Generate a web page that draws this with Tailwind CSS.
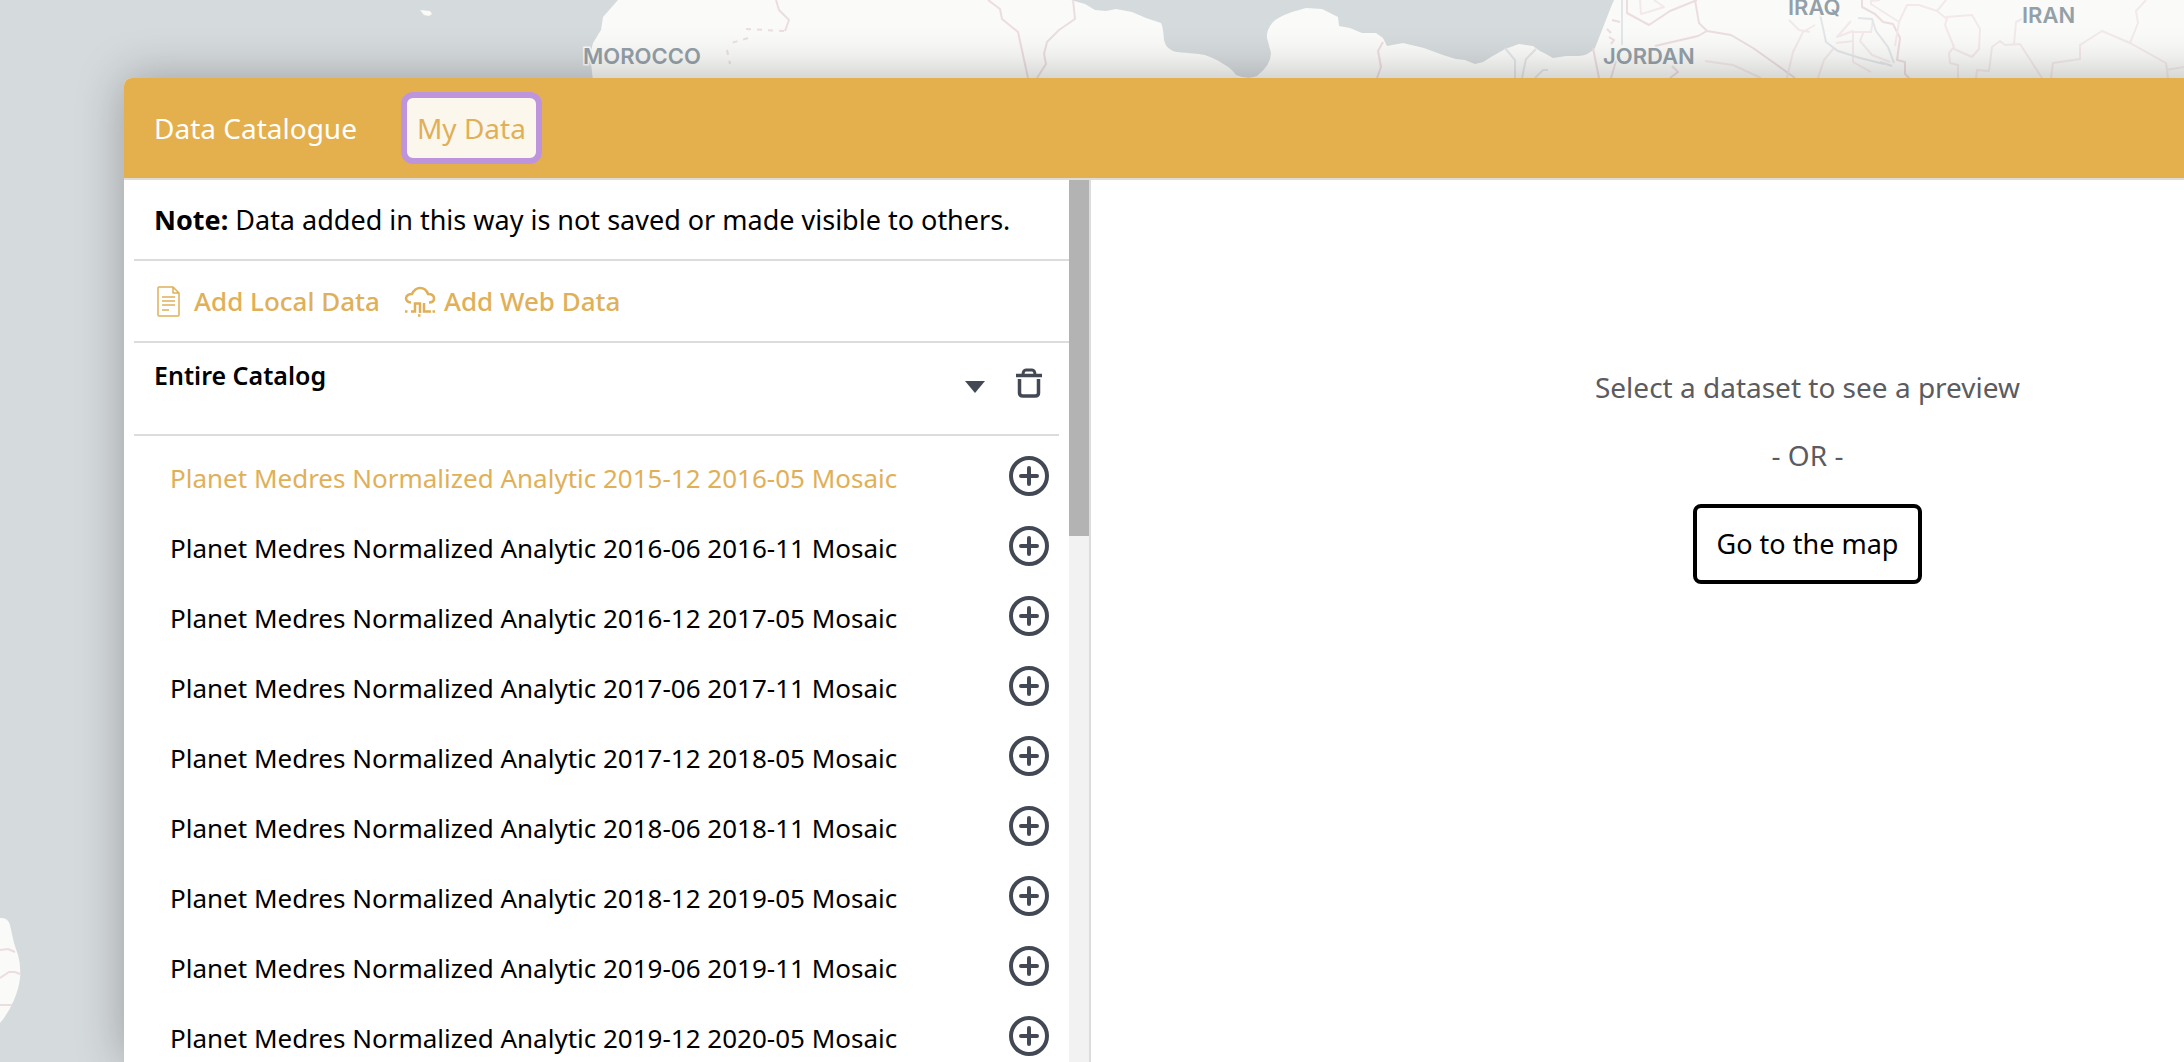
<!DOCTYPE html>
<html lang="en">
<head>
<meta charset="utf-8">
<title>Data Catalogue</title>
<script src="https://cdn.jsdelivr.net/npm/@tailwindcss/browser@4"></script>
</head>
<body class="h-screen overflow-hidden bg-[#d5dadd] font-['Noto_Sans',sans-serif] text-black">
<svg width="0" height="0" class="absolute" aria-hidden="true">
  <symbol id="plus" viewBox="0 0 40 40"><circle cx="20" cy="20" r="18" fill="none" stroke="#434954" stroke-width="4"/><path d="M20 12v16M12 20h16" fill="none" stroke="#434954" stroke-width="4" stroke-linecap="round"/></symbol>
</svg>
<div class="relative flex h-full flex-col overflow-hidden pt-[78px] pl-[124px]">
  <!-- Base map -->
  <svg class="absolute inset-0 h-full w-full" aria-hidden="true">
    <g fill="#fafaf8">
      <path d="M618 0L603 17L601 30L593 43L590 55L592 72L594 90H2300V0H1614L1611 7L1602 30L1595 48Q1589 55 1579 56L1566 56L1553 58L1546 54L1540 51L1533 46L1519 44L1505 49L1491 57L1483 62L1475 64L1465 60L1456 59L1443 55L1424 48L1403 43L1387 46L1383 38L1376 33L1362 33L1350 28L1339 26L1338 17L1322 9L1306 8L1292 12Q1278 17 1273 22Q1266 30 1267 38L1271 53Q1271 65 1257 76Q1248 80 1236 75Q1231 68 1225 65Q1210 55 1199 54L1177 52Q1166 50 1164 40Q1163 26 1161 23L1146 18L1132 12L1116 9L1106 11L1095 10L1085 4L1071 0Z"/>
      <path d="M420 10l10 1 2 3-3 2-5-1z"/>
      <path d="M0 918Q8 917 10 925L14 943L18 955Q21 965 20 978Q19 988 14 1000Q8 1014 0 1023Z"/>
    </g>
    <g fill="none" stroke="#ecdddf" stroke-width="2" stroke-linejoin="round">
      <path d="M776 0l3 10 10 10-4 11M988 0l12 9 2 10 16 13 10 46M1037 78l9-14-2-10 3-12 12-12 16-11-2-19M1383 42l-5 9 3 16-4 11"/>
      <path d="M784 31l-39-2M748 38l-20 6M727 50l3 14" stroke-dasharray="5 6"/>
      <path d="M0 950l8-1 7 3M0 978l9-6 6 0 5 2M0 1005h12"/>
      <path d="M1593 48l6 30M1611 78l5-17M1627 0l0 13 22 12 21-14 27-11M1695 0l4 23 8 8-9 5-43 10M1707 31l24 4 22 13 24 17 18 13M1612 20l8 2M1607 29l4 4M1609 37l5 3-3 4"/>
      <path d="M1862 0l0 7 13 7 8 8 10 2 7 14-3 22 8 2v12l6 6M1670 78l8-6-6-6"/>
    </g>
    <g fill="none" stroke="#f3e9ea" stroke-width="2" stroke-linejoin="round">
      <path d="M1705 61l28 4 28 13M1640 0l1 14 7-2 16-5-10-7M1880 0l-9 1 0 3 28 18 8-17 12 0 18 6 9-11M1899 22l-4 24M1937 11l10 8-2 6 9 22-5 6 1 10 8 2v13M1946 17l26-2 8 14-1 20-7 8-18-8M1976 78l1-8 12 1 3-24 8-6 5 4 15-1 22 34M2014 44l2-22 10-5M2051 78l2-15 27-4 0-14 22-14 28 12 36 20 2 15M2130 43l8-20-2-12 10-11M2166 70l18-3"/>
      <path d="M1787 78l6-26 10-20 12-7M1789 20l10 10 11 2M1818 78l6-18 10-12M1851 21l-14 16 16-6 0 31 18 10M1853 32l18 0 2-12M1836 43l18-2M1864 31l-4 10 12 14 18 7"/>
    </g>
    <g fill="none" stroke="#e2e6e8" stroke-width="2">
      <path d="M1505 48l10 12v18M1522 78l4-19 10-10M1535 78l8-8h5M1622 0v45M1820 14l6 28 12 9 22 7 24 6M1858 18l14 1 4 12 12 16 6 16M1880 62l12 4"/>
    </g>
    <g class="text-[22px] font-semibold" fill="#94a0a8" font-family="Inter, sans-serif" stroke="#fafaf8" stroke-width="3" paint-order="stroke">
      <text x="583" y="64">MOROCCO</text>
      <text x="1603" y="64">JORDAN</text>
      <text x="1788" y="15">IRAQ</text>
      <text x="2022" y="23">IRAN</text>
    </g>
  </svg>

  <main class="relative -mr-[340px] flex min-h-0 flex-1 flex-col rounded-tl-lg bg-white shadow-[0_0_48px_rgba(0,0,0,0.28)]">
    <nav class="flex h-[102px] shrink-0 items-center gap-[34px] rounded-tl-lg border-b-2 border-[#dedcd6] bg-[#e4b04d] pl-5 text-[28px] leading-10">
      <button class="px-[10px] text-white">Data Catalogue</button>
      <button class="h-[72px] rounded-xl border-6 border-[#be95dd] bg-[#fcf7ec] px-[10px] text-[#e0b058]">My Data</button>
    </nav>

    <div class="flex min-h-0 flex-1">
      <section class="flex w-[967px] shrink-0 overflow-hidden border-r-2 border-[#dcdcdc]">
        <div class="min-w-0 flex-1 pl-[10px]">
          <p class="h-[81px] border-b-2 border-[#dcdcdc] pt-5 pl-5 text-[27px] leading-10 whitespace-nowrap"><b>Note:</b> Data added in this way is not saved or made visible to others.</p>
          <div class="flex h-[82px] items-center gap-6 border-b-2 border-[#dcdcdc] pl-5 text-[26px] font-medium text-[#e0b058]">
            <button class="flex items-center gap-2">
              <svg class="size-8" viewBox="0 0 32 32" fill="none" stroke="currentColor" stroke-width="1.500" stroke-linejoin="round" aria-hidden="true"><path d="M4 3q0-1 1-1h14l6 6v22q0 1-1 1H5q-1 0-1-1zM19 2v6h6M8 12h13M8 16h13M8 20h13M8 25h7"/></svg>
              Add Local Data
            </button>
            <button class="flex items-center gap-2">
              <svg class="size-8" viewBox="0 0 32 32" fill="none" stroke="currentColor" stroke-width="2.500" aria-hidden="true"><path d="M7 17.500Q2 17 2 13Q3 9 8 9Q11 3 16 3Q22 3 24 9Q30 9 30 13.500Q30 17.500 25 17.500"/><path d="M7 26.500h4v-8h5v9.500M20 18v8.500h7M1 26.500h2.500M28.500 26.500h2.500M14 30.500h2.500"/></svg>
              Add Web Data
            </button>
          </div>
          <div class="mr-[10px] flex h-[93px] items-start border-b-2 border-[#dcdcdc] pt-4 pl-5">
            <h2 class="flex-1 text-[25px] leading-8 font-semibold">Entire Catalog</h2>
            <button class="mt-[22px] mr-[30px]" aria-label="Collapse catalog"><svg class="h-3 w-5" viewBox="0 0 20 12" aria-hidden="true"><path d="M0 0h20L10 12z" fill="#434954"/></svg></button>
            <button class="mt-2 mr-4" aria-label="Remove catalog"><svg class="h-8 w-7" viewBox="0 0 28 32" fill="none" stroke="#434954" aria-hidden="true"><path d="M1 8.500h26" stroke-width="3.500"/><path d="M8 8Q8 3 11 3h6Q20 3 20 8" stroke-width="3"/><path d="M4.500 12v14Q4.500 29 8 29h12Q23.500 29 23.500 26V12" stroke-width="3.500"/></svg></button>
          </div>
          <ul id="datasets" class="pt-[5px] text-[26px] leading-9"></ul>
        </div>
        <div class="w-5 shrink-0 bg-[#f2f2f2]"><div class="h-[356px] bg-[#b3b3b3]"></div></div>
      </section>

      <section class="flex flex-1 flex-col items-center pt-[187px] text-[28px] leading-10 text-[#5b5b60]">
        <p>Select a dataset to see a preview</p>
        <p class="mt-7">- OR -</p>
        <button class="mt-[29px] h-20 rounded-lg border-4 border-black px-5 text-[27px] text-black">Go to the map</button>
      </section>
    </div>
  </main>
</div>
<script>
const periods = ["2015-12 2016-05", "2016-06 2016-11", "2016-12 2017-05", "2017-06 2017-11", "2017-12 2018-05", "2018-06 2018-11", "2018-12 2019-05", "2019-06 2019-11", "2019-12 2020-05"];
document.getElementById("datasets").innerHTML = periods.map((p, i) => `
<li class="flex h-[70px] items-center justify-between pr-5 pl-9">
  <button class="pt-1 text-left ${i ? "text-black" : "text-[#e0b058]"}">Planet Medres Normalized Analytic ${p} Mosaic</button>
  <button aria-label="Add ${p} to the map"><svg class="size-10"><use href="#plus"/></svg></button>
</li>`).join("");
</script>
</body>
</html>
